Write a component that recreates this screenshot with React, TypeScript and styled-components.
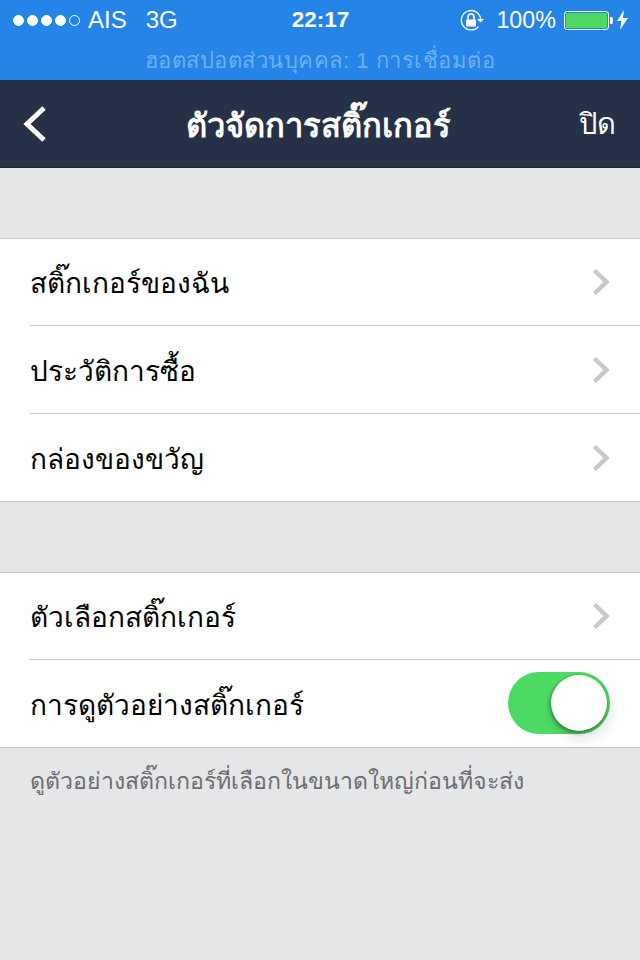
import React from 'react'
import styled, { createGlobalStyle } from 'styled-components'

const GlobalStyle = createGlobalStyle`
  html, body {
    margin: 0;
    padding: 0;
    background: #e5e6e8;
  }
  body {
    font-family: "Liberation Sans", "Noto Sans", "DejaVu Sans", sans-serif;
  }
`

const Page = styled.div`
  width: 640px;
  height: 960px;
  background: #e5e6e8;
  overflow: hidden;
`

const StatusArea = styled.div`
  height: 80px;
  background: #2484e8;
  color: #fff;
`

const StatusBar = styled.div`
  height: 40px;
  display: grid;
  grid-template-columns: 1fr auto 1fr;
  align-items: center;
  padding: 0 12px 0 13px;
  font-size: 24px;
`

const StatusLeft = styled.div`
  display: flex;
  align-items: center;
`

const StatusRight = styled.div`
  display: flex;
  align-items: center;
  justify-content: flex-end;
`

const Dots = styled.div`
  display: flex;
  gap: 3px;
  margin-right: 8px;
`

const Dot = styled.span<{ $on: boolean }>`
  box-sizing: border-box;
  width: 11px;
  height: 11px;
  border-radius: 50%;
  border: 1px solid #fff;
  background: ${({ $on }) => ($on ? '#fff' : 'transparent')};
`

const Carrier = styled.span`
  margin-right: 19px;
`

const Clock = styled.span`
  font-weight: 700;
  font-size: 22.5px;
`

const Percent = styled.span`
  margin: 0 8px 0 12px;
  font-size: 23.3px;
`

const Battery = styled.div`
  box-sizing: border-box;
  width: 45px;
  height: 19px;
  border: 1px solid #fff;
  border-radius: 3px;
  padding: 1px;
  margin-right: 1px;
`

const BatteryFill = styled.div`
  height: 100%;
  background: #4cd964;
  border-radius: 1px;
`

const BatteryCap = styled.div`
  width: 3px;
  height: 7px;
  background: #fff;
  border-radius: 0 2px 2px 0;
  margin-right: 4px;
`

const Hotspot = styled.div`
  height: 40px;
  display: flex;
  align-items: center;
  justify-content: center;
  font-size: 22px;
  color: #6fb0f1;
  letter-spacing: 0.52px;
`

const NavBar = styled.div`
  height: 87px;
  background: #263148;
  border-bottom: 1px solid #1b2334;
  display: grid;
  grid-template-columns: 100px 1fr 100px;
  align-items: center;
  color: #fff;
`

const BackButton = styled.div`
  padding-left: 22px;
  display: flex;
`

const NavTitle = styled.div`
  text-align: center;
  font-size: 32.7px;
  font-weight: 700;
  padding: 3px 4px 0 0;
`

const NavAction = styled.div`
  text-align: right;
  padding-right: 24px;
  font-size: 29px;
`

const Group = styled.div<{ $top: number }>`
  margin-top: ${({ $top }) => $top}px;
  background: #fff;
  border-top: 1px solid #c8c8cb;
  border-bottom: 1px solid #c8c8cb;
`

const Row = styled.div`
  box-sizing: border-box;
  height: 86px;
  margin-left: 30px;
  padding-right: 30px;
  display: flex;
  align-items: center;
  justify-content: space-between;
  font-size: 28px;
  color: #000;
  & + & {
    height: 88px;
    border-top: 1px solid #c8c8cb;
  }
`

const RowLabel = styled.span`
  padding-top: 2px;
`

const Toggle = styled.div`
  width: 102px;
  height: 62px;
  margin-top: -1px;
  border-radius: 31px;
  background: #4cd964;
  position: relative;
`

const Knob = styled.div`
  position: absolute;
  top: 3px;
  right: 3px;
  width: 56px;
  height: 56px;
  border-radius: 50%;
  background: #fff;
  box-shadow: -1px 2px 4px rgba(0, 0, 0, 0.4), 4px 8px 14px rgba(0, 0, 0, 0.1);
`

const FootNote = styled.div`
  padding: 14px 30px 0;
  font-size: 23.1px;
  color: #6d6d72;
`

const Chevron = () => (
  <svg width="20" height="28" viewBox="0 0 20 28">
    <path d="M4.5 2.5L16.5 14L4.5 25.5" fill="none" stroke="#c7c7cc" strokeWidth="4.5" />
  </svg>
)

const RotationLock = () => (
  <svg width="25" height="22" viewBox="0 0 25 22">
    <path d="M19.5 17.5A9.7 9.7 0 1 1 21.7 10" fill="none" stroke="#fff" strokeWidth="1.3" />
    <path d="M18 10h7l-3.5 3.5z" fill="#fff" />
    <rect x="7" y="10.5" width="10" height="7" rx="1" fill="#fff" />
    <path d="M9 11V8a3 3 0 0 1 6 0v3" fill="none" stroke="#fff" strokeWidth="1.6" />
  </svg>
)

const Bolt = () => (
  <svg width="11" height="20" viewBox="0 0 11 20">
    <path d="M7 0L0 11h4.5L3 20l8-12H6z" fill="#fff" />
  </svg>
)

const App = () => (
  <Page>
    <GlobalStyle />
    <StatusArea>
      <StatusBar>
        <StatusLeft>
          <Dots>
            {[1, 1, 1, 1, 0].map((v, i) => (
              <Dot key={i} $on={v > 0} />
            ))}
          </Dots>
          <Carrier>AIS</Carrier>
          <span>3G</span>
        </StatusLeft>
        <Clock>22:17</Clock>
        <StatusRight>
          <RotationLock />
          <Percent>100%</Percent>
          <Battery>
            <BatteryFill />
          </Battery>
          <BatteryCap />
          <Bolt />
        </StatusRight>
      </StatusBar>
      <Hotspot>ฮอตสปอตส่วนบุคคล: 1 การเชื่อมต่อ</Hotspot>
    </StatusArea>
    <NavBar>
      <BackButton>
        <svg width="26" height="38" viewBox="0 0 26 38">
          <path d="M22 3L5 19l17 16" fill="none" stroke="#fff" strokeWidth="5" />
        </svg>
      </BackButton>
      <NavTitle>ตัวจัดการสติ๊กเกอร์</NavTitle>
      <NavAction>ปิด</NavAction>
    </NavBar>
    <Group $top={70}>
      <Row><RowLabel>สติ๊กเกอร์ของฉัน</RowLabel><Chevron /></Row>
      <Row><RowLabel>ประวัติการซื้อ</RowLabel><Chevron /></Row>
      <Row><RowLabel>กล่องของขวัญ</RowLabel><Chevron /></Row>
    </Group>
    <Group $top={70}>
      <Row><RowLabel>ตัวเลือกสติ๊กเกอร์</RowLabel><Chevron /></Row>
      <Row>
        <RowLabel>การดูตัวอย่างสติ๊กเกอร์</RowLabel>
        <Toggle>
          <Knob />
        </Toggle>
      </Row>
    </Group>
    <FootNote>ดูตัวอย่างสติ๊กเกอร์ที่เลือกในขนาดใหญ่ก่อนที่จะส่ง</FootNote>
  </Page>
)

export default App
